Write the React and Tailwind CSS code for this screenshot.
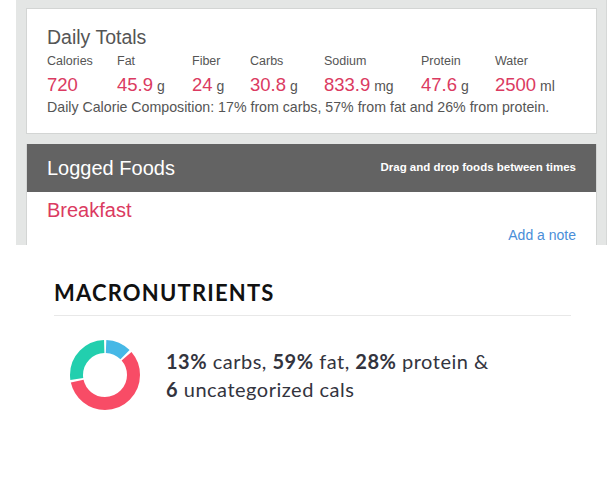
import React from "react";

const cols = [
  { label: "Calories", value: "720", unit: "", w: "w-[70px]" },
  { label: "Fat", value: "45.9", unit: "g", w: "w-[75px]" },
  { label: "Fiber", value: "24", unit: "g", w: "w-[58px]" },
  { label: "Carbs", value: "30.8", unit: "g", w: "w-[74px]" },
  { label: "Sodium", value: "833.9", unit: "mg", w: "w-[97px]" },
  { label: "Protein", value: "47.6", unit: "g", w: "w-[74px]" },
  { label: "Water", value: "2500", unit: "ml", w: "w-[80px]" },
];

function Donut() {
  const r = 28.5;
  const C = 2 * Math.PI * r;
  const segs = [
    { p: 0.13, c: "#46b8e6" },
    { p: 0.59, c: "#f84c66" },
    { p: 0.28, c: "#22cfae" },
  ];
  const gap = 2.2;
  let acc = 0;
  return (
    <svg width="72" height="72" viewBox="0 0 72 72" className="shrink-0">
      <g transform="rotate(-90 36 36)">
        {segs.map((s, i) => {
          const len = s.p * C - gap;
          const off = acc + gap / 2;
          acc += s.p * C;
          return (
            <circle
              key={i}
              cx="36"
              cy="36"
              r={r}
              fill="none"
              stroke={s.c}
              strokeWidth="13"
              strokeDasharray={`${len} ${C - len}`}
              strokeDashoffset={-off}
            />
          );
        })}
      </g>
    </svg>
  );
}

export default function App() {
  return (
    <div className="w-[614px] h-[480px] bg-white overflow-hidden">
      <div className="flex">
        <div className="w-[16px]" />
        <div className="w-[591px] h-[245px] overflow-hidden bg-[#e4e6e5] border-r border-[#d6d8d7] pl-[10px] pr-[9px] pt-[8px] font-['Liberation_Sans',Arial,sans-serif]">
          <div className="bg-white border border-[#d3d5d4] h-[126px] pl-[20px] pt-[16px]">
            <div className="text-[19.5px] leading-[24px] text-[#555]">Daily Totals</div>
            <div className="flex mt-[4px]">
              {cols.map((c) => (
                <div key={c.label} className={c.w}>
                  <div className="text-[12.5px] leading-[16px] text-[#555]">{c.label}</div>
                  <div className="mt-[4px] leading-[24px] whitespace-nowrap">
                    <span className="text-[18.5px] text-[#db3a61]">{c.value}</span>
                    {c.unit && <span className="text-[14px] text-[#555]"> {c.unit}</span>}
                  </div>
                </div>
              ))}
            </div>
            <div className="mt-[1px] text-[14.2px] leading-[16px] text-[#555] whitespace-nowrap">
              Daily Calorie Composition: 17% from carbs, 57% from fat and 26% from protein.
            </div>
          </div>
          <div className="mt-[10px] bg-white border-x border-[#d3d5d4] h-[200px]">
            <div className="h-[48px] bg-[#636363] flex items-center justify-between pl-[20px] pr-[20px]">
              <span className="text-[20px] text-white">Logged Foods</span>
              <span className="text-[11.5px] font-bold text-white">Drag and drop foods between times</span>
            </div>
            <div className="pl-[20px] pr-[20px] pt-[6px]">
              <div className="text-[20px] leading-[24px] text-[#db3a61]">Breakfast</div>
              <div className="mt-[3px] text-right text-[14px] leading-[20px] text-[#4a8ed8]">Add a note</div>
            </div>
          </div>
        </div>
      </div>
      <div className="ml-[54px] w-[517px] pt-[34px] font-['Lato',sans-serif]">
        <div className="text-[22px] leading-[28px] font-bold tracking-[1.2px] text-[#111] pb-[8px] border-b border-[#e8e8e8]">
          MACRONUTRIENTS
        </div>
        <div className="flex items-center mt-[23px] pl-[15px]">
          <Donut />
          <div className="ml-[25px] text-[20px] leading-[28px] tracking-[0.5px] text-[#33343e]">
            <div>
              <b className="font-bold">13%</b> carbs, <b className="font-bold">59%</b> fat,{" "}
              <b className="font-bold">28%</b> protein &amp;
            </div>
            <div>
              <b className="font-bold">6</b> uncategorized cals
            </div>
          </div>
        </div>
      </div>
    </div>
  );
}
